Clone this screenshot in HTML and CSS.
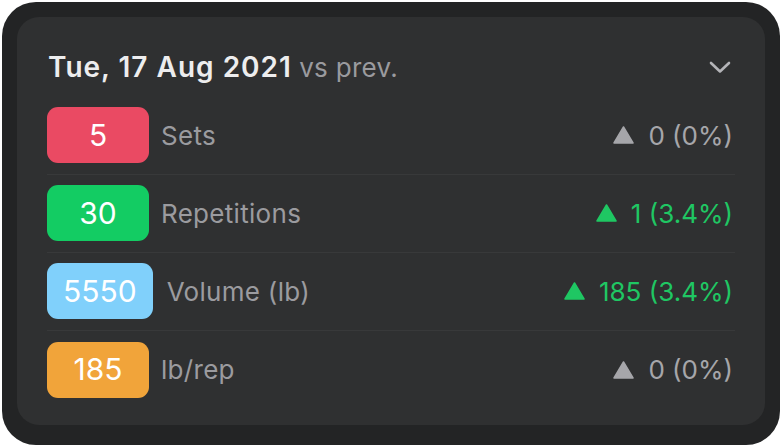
FILE: index.html
```html
<!DOCTYPE html>
<html>
<head>
<meta charset="utf-8">
<link rel="stylesheet" href="styles.css">
</head>
<body>
<div class="frame">
  <div class="card">
    <div class="header">
      <div class="title"><span class="date">Tue, 17 Aug 2021</span> <span class="vs">vs prev.</span></div>
      <svg class="chev" width="22" height="13" viewBox="0 0 22 13"><path d="M2 2 L11 10.5 L20 2" fill="none" stroke="#b4b4b8" stroke-width="2.6" stroke-linecap="round" stroke-linejoin="round"/></svg>
    </div>
    <div class="row">
      <div class="badge red">5</div>
      <div class="label">Sets</div>
      <div class="delta zero"><svg class="tri" width="21" height="18" viewBox="0 0 21 18"><path d="M10.5 1 L20 17 L1 17 Z" fill="currentColor" stroke="currentColor" stroke-width="1.5" stroke-linejoin="round"/></svg><span>0 (0%)</span></div>
    </div>
    <div class="row">
      <div class="badge green">30</div>
      <div class="label">Repetitions</div>
      <div class="delta up"><svg class="tri" width="21" height="18" viewBox="0 0 21 18"><path d="M10.5 1 L20 17 L1 17 Z" fill="currentColor" stroke="currentColor" stroke-width="1.5" stroke-linejoin="round"/></svg><span>1 (3.4%)</span></div>
    </div>
    <div class="row">
      <div class="badge blue">5550</div>
      <div class="label wide">Volume (lb)</div>
      <div class="delta up"><svg class="tri" width="21" height="18" viewBox="0 0 21 18"><path d="M10.5 1 L20 17 L1 17 Z" fill="currentColor" stroke="currentColor" stroke-width="1.5" stroke-linejoin="round"/></svg><span>185 (3.4%)</span></div>
    </div>
    <div class="row last">
      <div class="badge orange">185</div>
      <div class="label">lb/rep</div>
      <div class="delta zero"><svg class="tri" width="21" height="18" viewBox="0 0 21 18"><path d="M10.5 1 L20 17 L1 17 Z" fill="currentColor" stroke="currentColor" stroke-width="1.5" stroke-linejoin="round"/></svg><span>0 (0%)</span></div>
    </div>
  </div>
</div>
</body>
</html>
```
FILE: styles.css
```css
html, body {
  margin: 0;
  padding: 0;
  background: #ffffff;
}
body {
  width: 784px;
  height: 448px;
  font-family: Inter, "Liberation Sans", sans-serif;
}
.frame {
  margin: 2px 0 0 2px;
  width: 778px;
  height: 443px;
  box-sizing: border-box;
  background: #232425;
  border-radius: 34px;
  padding: 15px 15px 20px 15px;
}
.card {
  background: #2f3031;
  border-radius: 22px;
  height: 100%;
  box-sizing: border-box;
  padding: 0 30px 0 30px;
}
.header {
  height: 80px;
  display: flex;
  align-items: flex-start;
  justify-content: space-between;
  padding: 34px 4px 0 1px;
  box-sizing: border-box;
}
.title {
  font-size: 26px;
  line-height: 32px;
  white-space: nowrap;
}
.date {
  color: #ededee;
  font-weight: 600;
  font-size: 28px;
  letter-spacing: 1px;
}
.vs {
  color: #9a9a9e;
  font-size: 26px;
  letter-spacing: 0.3px;
}
.chev {
  margin-top: 10px;
}
.row {
  height: 78px;
  box-sizing: border-box;
  display: flex;
  align-items: center;
  border-bottom: 1px solid #38393a;
  padding-bottom: 1px;
}
.row.last {
  border-bottom: none;
}
.badge {
  min-width: 102px;
  height: 56px;
  box-sizing: border-box;
  padding: 0 16px 1px 16px;
  border-radius: 11px;
  display: flex;
  align-items: center;
  justify-content: center;
  color: #ffffff;
  font-size: 30px;
}
.red { background: #ea4a63; }
.green { background: #13cc63; }
.blue { background: #80d0fb; }
.orange { background: #f1a43a; }
.label {
  margin-left: 12px;
  color: #9b9b9f;
  font-size: 26px;
  letter-spacing: 0.3px;
  flex: 1;
}
.label.wide {
  margin-left: 14px;
}
.delta {
  display: flex;
  align-items: center;
  gap: 14px;
  font-size: 26px;
  padding-right: 2px;
}
.zero { color: #a6a6aa; }
.up { color: #1fc763; }
.tri { display: block; }
```
